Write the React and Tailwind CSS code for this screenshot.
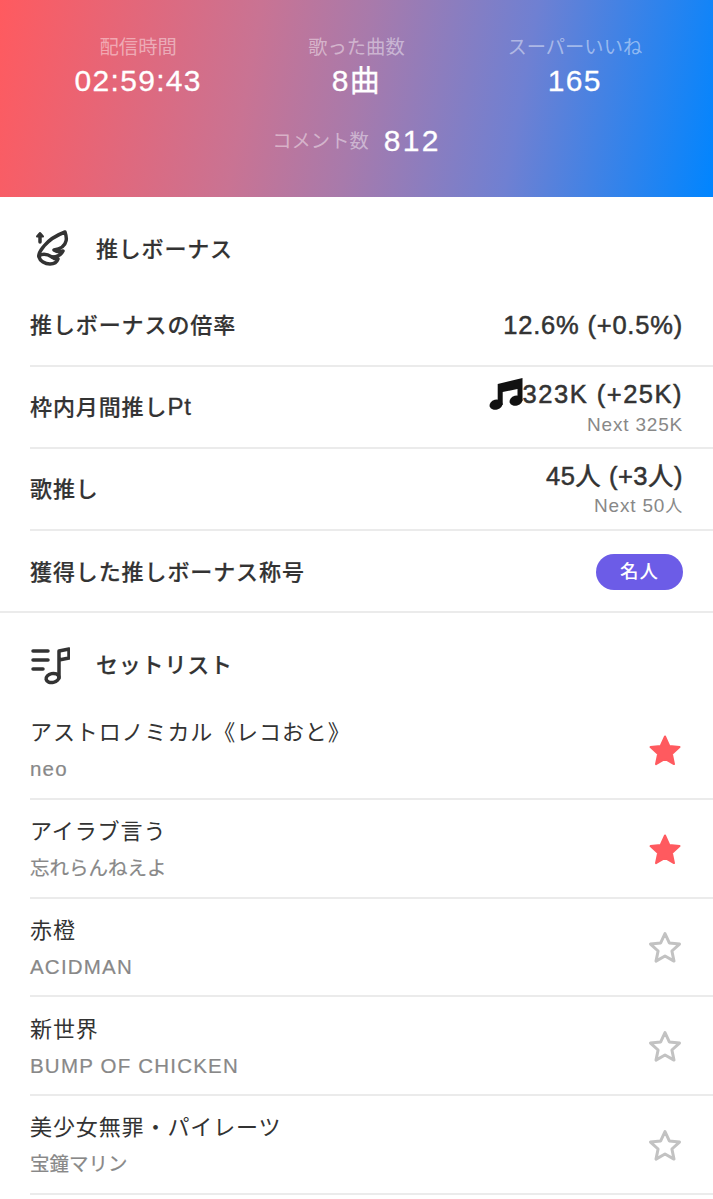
import React from "react";

const font = { fontFamily: '"Liberation Sans","Noto Sans CJK JP",sans-serif' };

function Wing() {
  return (
    <svg width="40" height="40" viewBox="0 0 40 40" fill="none" stroke="#333" strokeWidth="3.500" strokeLinecap="round" strokeLinejoin="round">
      <path d="M10 13V6" />
      <path d="M7 7.500 10 4l3 3.500Z" fill="#333" strokeWidth="2" />
      <path d="M35 3C27 6 19 11 14 17C11 21 8 24 9 28C10 32 15 35 20 35C24 35 27 33 28 30C26 30 24 30 22 28C27 28 31 26 33 22C30 23 27 23 24 21C30 20 35 17 36 12C37 9 36 6 35 3Z" />
      <path d="M9 27C13 24 17 25 22 28" />
    </svg>
  );
}

function ListIcon() {
  return (
    <svg width="40" height="40" viewBox="0 0 40 40" fill="none" stroke="#333" strokeWidth="3.500" strokeLinecap="round" strokeLinejoin="round">
      <path d="M3 6h15" />
      <path d="M3 15h15" />
      <path d="M3 24h10" />
      <path d="M29 33V6l10-2v9l-10 2" />
      <ellipse cx="22.500" cy="33" rx="6.500" ry="4.500" transform="rotate(-12 22.500 33)" />
    </svg>
  );
}

function Note() {
  return (
    <svg width="34" height="34" viewBox="0 0 34 34" fill="#111" className="shrink-0">
      <path d="M8.700 7 33.500 1V24h-5V12L13.700 15V28H8.700Z" />
      <ellipse cx="7" cy="27.700" rx="6.500" ry="5" transform="rotate(-15 7 27.700)" />
      <ellipse cx="27" cy="23.700" rx="6.500" ry="5" transform="rotate(-15 27 23.700)" />
    </svg>
  );
}

function Star({ on }) {
  const d = "M17 2.500l4.300 9.400 10.200 1.200-7.600 6.900 2.100 10.100L17 25l-9 5.100 2.100-10.100-7.600-6.900 10.200-1.200Z";
  return (
    <svg width="34" height="34" viewBox="0 0 34 34" className="shrink-0">
      <path d={d} fill={on ? "#ff5a5f" : "none"} stroke={on ? "#ff5a5f" : "#c2c2c2"} strokeWidth={on ? 2 : 3} strokeLinejoin="round" />
    </svg>
  );
}

function Stat({ label, value }) {
  return (
    <div className="flex flex-col items-center">
      <div className="text-[19.300px] leading-[26px] text-white/45">{label}</div>
      <div className="mt-[2px] text-[30px] leading-[36px] tracking-[1.300px] text-white [-webkit-text-stroke:0.3px_#fff]">{value}</div>
    </div>
  );
}

function Row({ label, main, sub, children, border = true }) {
  return (
    <div className={`ml-[30px] h-[82px] flex items-center justify-between pr-[30px] ${border ? "border-b-2 border-[#ebebeb]" : ""}`}>
      <div className="text-[22px] font-medium text-[#333] tracking-[0.9px] [-webkit-text-stroke:0.2px_#333]">{label}</div>
      {children || (
        <div className="flex flex-col items-end">
          <div className="flex items-center text-[25.500px] leading-[32px] text-[#333] tracking-[0.8px] [-webkit-text-stroke:0.5px_#333]">{main}</div>
          {sub && <div className="mt-[2px] text-[19px] leading-[24px] text-[#888] tracking-[0.8px]">{sub}</div>}
        </div>
      )}
    </div>
  );
}

function Song({ title, artist, latin, on }) {
  return (
    <div className="ml-[30px] h-[98.750px] flex items-center justify-between pr-[31px] pt-[3px] border-b-2 border-[#ebebeb]">
      <div className="flex flex-col gap-[9px]">
        <div className="text-[22px] leading-[28px] text-[#333] tracking-[0.9px]">{title}</div>
        <div className={latin ? "text-[20.500px] leading-[26px] text-[#888] tracking-[1.200px] [-webkit-text-stroke:0.2px_#888]" : "text-[19.500px] leading-[26px] text-[#888] [-webkit-text-stroke:0.2px_#888]"}>{artist}</div>
      </div>
      <Star on={on} />
    </div>
  );
}

function SectionTitle({ icon, title }) {
  return (
    <div className="flex items-center gap-[16px] pl-[30px] text-[22px] font-medium text-[#333] tracking-[0.8px] [-webkit-text-stroke:0.2px_#333]">
      <div className="w-[50px] shrink-0">{icon}</div>
      <div>{title}</div>
    </div>
  );
}

export default function App() {
  return (
    <div style={font} className="w-[713px] h-[1199px] overflow-hidden bg-white">
      <div className="h-[197px] bg-[linear-gradient(100deg,#ff5a5f_0%,#c97393_35%,#a87aab_50%,#6f80d2_72%,#0085ff_100%)] pt-[35px]">
        <div className="grid grid-cols-3 px-[29px]">
          <Stat label="配信時間" value="02:59:43" />
          <Stat label="歌った曲数" value="8曲" />
          <Stat label="スーパーいいね" value="165" />
        </div>
        <div className="mt-[24px] flex items-center justify-center gap-[15px]">
          <span className="mt-[2px] text-[19.300px] text-white/45">コメント数</span>
          <span className="text-[30px] leading-[36px] tracking-[2.300px] text-white [-webkit-text-stroke:0.3px_#fff]">812</span>
        </div>
      </div>

      <div className="h-[416px] border-b-2 border-[#ebebeb]">
        <div className="pt-[32px] h-[88px]">
          <SectionTitle icon={<Wing />} title="推しボーナス" />
        </div>
        <div>
          <Row label="推しボーナスの倍率" main="12.6% (+0.5%)" />
          <Row label={<>枠内月間推し<span className="text-[24px] [-webkit-text-stroke:0.3px_#333]">Pt</span></>} main={<><Note /><span className="tracking-[1.500px]">323K (+25K)</span></>} sub="Next 325K" />
          <Row label="歌推し" main={<span className="tracking-[0.500px]">45人 (+3人)</span>} sub={<>Next 50<span className="text-[17px]">人</span></>} />
          <Row label="獲得した推しボーナス称号" border={false}>
            <div className="w-[87px] h-[36px] rounded-full bg-[#6c5ce7] flex items-center justify-center text-[18.500px] font-medium text-white tracking-[1px]">名人</div>
          </Row>
        </div>
      </div>

      <div className="pt-[32px]">
        <SectionTitle icon={<ListIcon />} title="セットリスト" />
      </div>
      <div className="mt-[16px]">
        <Song title="アストロノミカル《レコおと》" artist="neo" latin on />
        <Song title="アイラブ言う" artist="忘れらんねえよ" on />
        <Song title="赤橙" artist="ACIDMAN" latin />
        <Song title="新世界" artist="BUMP OF CHICKEN" latin />
        <Song title="美少女無罪・パイレーツ" artist="宝鐘マリン" />
      </div>
    </div>
  );
}
